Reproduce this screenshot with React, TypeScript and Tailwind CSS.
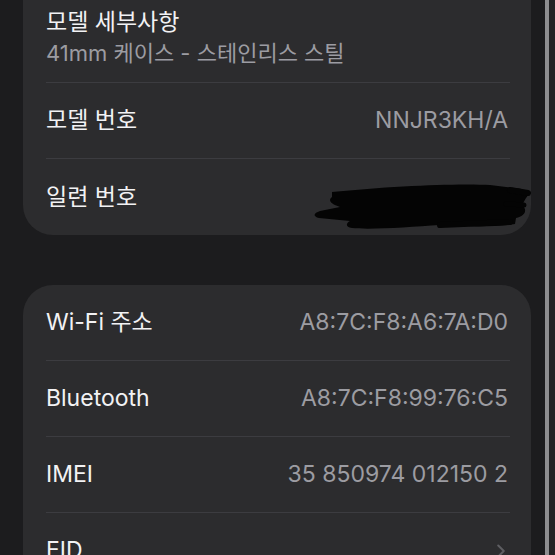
import { ChevronRight } from "lucide-react";

const font = { fontFamily: 'Inter, "Noto Sans CJK KR", sans-serif' };

type RowProps = {
    label: string;
    value?: string;
    chevron?: boolean;
    divider?: boolean;
};

function Row({ label, value, chevron, divider = true }: RowProps) {
    return (
        <div className="flex flex-col">
            <div className="flex h-[75px] items-center justify-between pl-[23px] pr-[23px]">
                <span className="text-[23px] text-[#f2f2f4]">{label}</span>
                {value && <span className="text-[23px] text-[#9c9ca2]">{value}</span>}
                {chevron && (
                    <ChevronRight className="mr-[-4px] h-[22px] w-[22px] text-[#5e5e62]" strokeWidth={2.2} />
                )}
            </div>
            {divider && <div className="ml-[23px] mr-[21px] h-px bg-[#3c3c40]" />}
        </div>
    );
}

function Scribble() {
    return (
        <svg
            className="absolute left-[287px] top-[178px]"
            width="225"
            height="60"
            viewBox="0 0 225 60"
        >
            <path
                d="M 22 14 C 80 8, 150 5, 180 7 L 205 10 C 216 11, 221 15, 216 20 L 212 27 C 218 32, 215 38, 206 40 L 205 46 C 180 50, 150 48, 130 47 C 100 49, 60 52, 42 50 C 35 49, 36 45, 40 43 L 9 40 C 2 38, 4 35, 10 33 L 30 29 C 20 26, 18 22, 22 19 Z"
                fill="#040404"
            />
            <path d="M 200 12 L 218 15" stroke="#040404" strokeWidth="6" strokeLinecap="round" />
            <path d="M 196 26 L 214 27" stroke="#040404" strokeWidth="5" strokeLinecap="round" />
            <path d="M 130 47 L 200 44" stroke="#040404" strokeWidth="6" strokeLinecap="round" />
        </svg>
    );
}

export default function App() {
    return (
        <div className="flex h-[555px] w-[555px] overflow-hidden bg-[#1c1c1e]" style={font}>
            <div className="flex w-[531px] flex-col pl-[23px]">
                <div className="relative flex flex-col rounded-b-[30px] bg-[#2c2c2e]">
                    <div className="flex flex-col pb-[15px] pl-[23px] pt-[8px]">
                        <span className="text-[23px] leading-[28px] text-[#f2f2f4]">모델 세부사항</span>
                        <span className="mt-[3px] text-[22px] leading-[28px] text-[#9c9ca2]">
                            41mm 케이스 - 스테인리스 스틸
                        </span>
                    </div>
                    <div className="ml-[23px] mr-[21px] h-px bg-[#3c3c40]" />
                    <Row label="모델 번호" value="NNJR3KH/A" />
                    <div className="h-[1px]" />
                    <Row label="일련 번호" divider={false} />
                    <Scribble />
                </div>

                <div className="mt-[50px] flex flex-col rounded-t-[30px] bg-[#2c2c2e]">
                    <Row label="Wi-Fi 주소" value="A8:7C:F8:A6:7A:D0" />
                    <Row label="Bluetooth" value="A8:7C:F8:99:76:C5" />
                    <Row label="IMEI" value="35 850974 012150 2" />
                    <Row label="EID" chevron divider={false} />
                </div>
            </div>
            <div className="ml-[14px] w-[4px] bg-[#8e8e90]" />
            <div className="flex-1 bg-[#232325]" />
        </div>
    );
}
